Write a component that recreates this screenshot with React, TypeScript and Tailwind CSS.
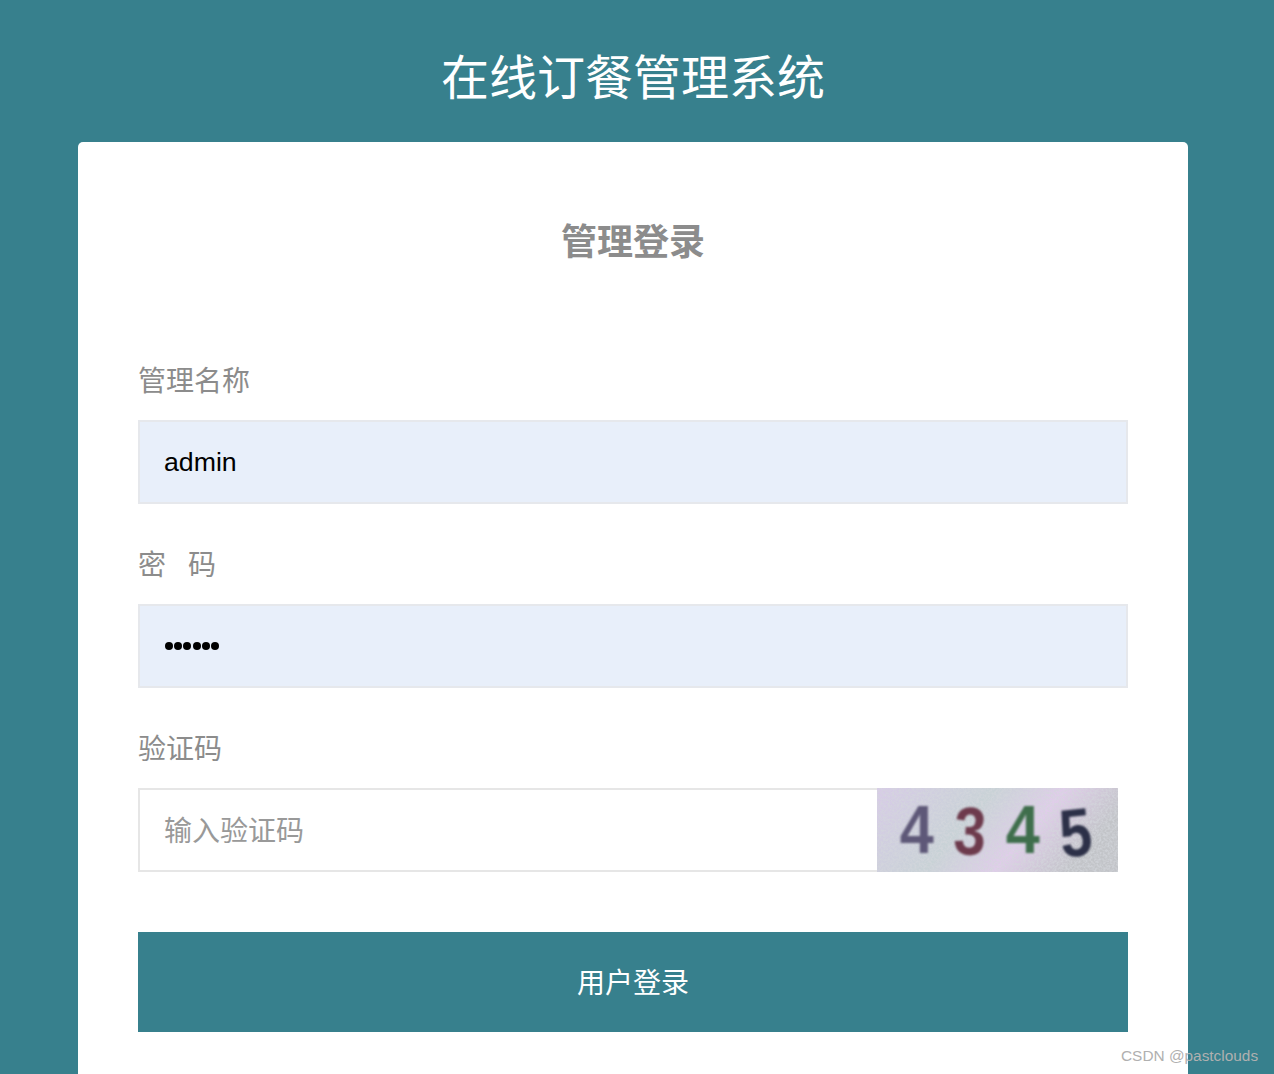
const cjk = "font-['Liberation_Sans','Noto_Sans_CJK_SC',sans-serif]";

function Label({ children }: { children: React.ReactNode }) {
  return <label className="block h-[36px] text-[28px] leading-[36px] text-[#8c8c8c] whitespace-pre">{children}</label>;
}

function Captcha() {
  return (
    <div className="relative w-[241px] h-[84px] shrink-0 bg-[#cfc8dc]">
      <svg className="absolute inset-0" width="241" height="84" aria-hidden="true">
        <defs>
          <filter id="noise" x="0" y="0" width="100%" height="100%">
            <feTurbulence type="fractalNoise" baseFrequency="0.45" numOctaves="2" seed="7" />
            <feColorMatrix values="0 0 0 0 0.66  0 0 0 0 0.68  0 0 0 0 0.72  2.6 0 0 0 -0.9" />
          </filter>
          <linearGradient id="tint" x1="0" y1="0" x2="1" y2="0.3">
            <stop offset="0" stopColor="#d8cbe8" />
            <stop offset="0.45" stopColor="#c8d2d6" />
            <stop offset="0.72" stopColor="#e0cdea" />
            <stop offset="1" stopColor="#c2c4c8" />
          </linearGradient>
        </defs>
        <rect width="241" height="84" fill="url(#tint)" />
        <rect width="241" height="84" filter="url(#noise)" opacity="0.7" />
      </svg>
      <div className="absolute inset-0 flex items-center pl-[20px] font-['Liberation_Sans',sans-serif] font-bold text-[68px] leading-none blur-[1.2px]">
        <span className="w-[53px] text-[#5e5878] scale-x-90 -translate-y-[1px]">4</span>
        <span className="w-[53px] text-[#6d3a4c] scale-x-85 translate-y-[1px] rotate-3">3</span>
        <span className="w-[53px] text-[#3f6e4c] scale-x-90 -translate-y-[1px]">4</span>
        <span className="w-[44px] text-[#2c3048] scale-x-85 translate-y-[2px] -rotate-6">5</span>
      </div>
    </div>
  );
}

export default function App() {
  return (
    <div className={`relative h-[1074px] overflow-hidden bg-[#37808d] ${cjk}`}>
      <div className="w-[1266px]">
        <h1 className="h-[142px] pt-[46px] text-center text-[48px] leading-[66px] text-white font-normal">在线订餐管理系统</h1>
        <main className="ml-[78px] w-[1110px] h-[960px] rounded-t-[5px] bg-white px-[60px] pt-[76px]">
          <h2 className="text-center text-[36px] leading-[50px] font-bold text-[#8c8c8c]">管理登录</h2>
          <form className="mt-[96px]">
            <Label>管理名称</Label>
            <div className="mt-[20px] flex h-[84px] items-center border-2 border-[#e6e8ec] bg-[#e8effa] pl-[24px] text-[26.7px] text-black">admin</div>
            <div className="mt-[44px]"><Label>密<span className="inline-block w-[22px]" />码</Label></div>
            <div className="mt-[20px] flex h-[84px] items-center gap-[1.2px] border-2 border-[#e6e8ec] bg-[#e8effa] pl-[25px]">
              {[0, 1, 2, 3, 4, 5].map((i) => (
                <span key={i} className="size-[8px] rounded-full bg-black" />
              ))}
            </div>
            <div className="mt-[44px]"><Label>验证码</Label></div>
            <div className="mt-[20px] flex h-[84px] w-[980px]">
              <div className="flex flex-1 items-center border-2 border-r-0 border-[#e6e6e6] pl-[24px] pt-[4px] text-[28px] text-[#999999]">输入验证码</div>
              <Captcha />
            </div>
            <button type="button" className="mt-[60px] block h-[100px] w-[990px] bg-[#37808d] pt-[4px] text-[28px] text-white">用户登录</button>
          </form>
        </main>
      </div>
      <div className="absolute left-[1121px] top-[1046px] text-[15.4px] leading-[20px] text-[#b0b0b0] font-['Liberation_Sans',sans-serif]">CSDN @pastclouds</div>
    </div>
  );
}
